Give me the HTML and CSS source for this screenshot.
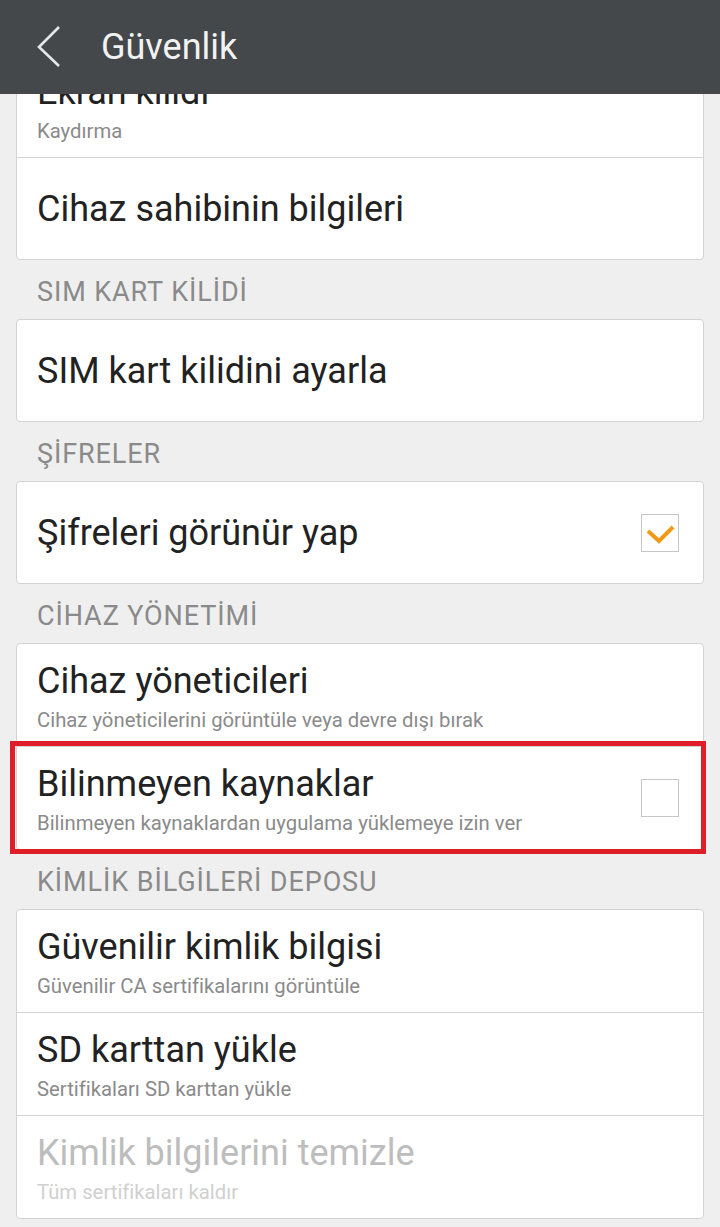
FILE: index.html
```html
<!DOCTYPE html>
<html lang="tr">
<head>
  <meta charset="UTF-8" />
  <meta name="viewport" content="width=device-width, initial-scale=1.0"/>
  <title>Güvenlik</title>
  <link rel="stylesheet" href="styles.css">
</head>
<body>
  <header class="appbar">
    <svg class="back" width="30" height="44" viewBox="0 0 30 44">
      <polyline points="24,2 4,22 24,41" fill="none" stroke="#e6e7e8" stroke-width="2.6"/>
    </svg>
    <h1>Güvenlik</h1>
  </header>

  <main class="list">
    <div class="scroll">
      <div class="card">
        <div class="row two">
          <div class="text">
            <div class="title">Ekran kilidi</div>
            <div class="summary">Kaydırma</div>
          </div>
        </div>
        <div class="row">
          <div class="text">
            <div class="title">Cihaz sahibinin bilgileri</div>
          </div>
        </div>
      </div>

      <div class="section">SIM KART KİLİDİ</div>
      <div class="card">
        <div class="row">
          <div class="text">
            <div class="title">SIM kart kilidini ayarla</div>
          </div>
        </div>
      </div>

      <div class="section">ŞİFRELER</div>
      <div class="card">
        <div class="row">
          <div class="text">
            <div class="title">Şifreleri görünür yap</div>
          </div>
          <span class="checkbox">
            <svg width="36" height="36" viewBox="0 0 36 36">
              <polyline points="6,16 17,26 31,12" fill="none" stroke="#f29a17" stroke-width="4"/>
            </svg>
          </span>
        </div>
      </div>

      <div class="section">CİHAZ YÖNETİMİ</div>
      <div class="card">
        <div class="row two">
          <div class="text">
            <div class="title">Cihaz yöneticileri</div>
            <div class="summary">Cihaz yöneticilerini görüntüle veya devre dışı bırak</div>
          </div>
        </div>
        <div class="row two highlight">
          <div class="text">
            <div class="title">Bilinmeyen kaynaklar</div>
            <div class="summary">Bilinmeyen kaynaklardan uygulama yüklemeye izin ver</div>
          </div>
          <span class="checkbox"></span>
        </div>
      </div>

      <div class="section">KİMLİK BİLGİLERİ DEPOSU</div>
      <div class="card">
        <div class="row two">
          <div class="text">
            <div class="title">Güvenilir kimlik bilgisi</div>
            <div class="summary">Güvenilir CA sertifikalarını görüntüle</div>
          </div>
        </div>
        <div class="row two">
          <div class="text">
            <div class="title">SD karttan yükle</div>
            <div class="summary">Sertifikaları SD karttan yükle</div>
          </div>
        </div>
        <div class="row two disabled">
          <div class="text">
            <div class="title">Kimlik bilgilerini temizle</div>
            <div class="summary">Tüm sertifikaları kaldır</div>
          </div>
        </div>
      </div>
    </div>
  </main>
</body>
</html>
```

FILE: styles.css
```css
body {
  margin: 0;
  font-family: Roboto, "Noto Sans", sans-serif;
  background-color: #efefef;
  color: #222;
  height: 100vh;
  overflow: hidden;
  display: flex;
  flex-direction: column;
}

.appbar {
  height: 94px;
  flex: none;
  background-color: #44484b;
  display: flex;
  align-items: center;
  padding-left: 35px;
}

.back {
  display: block;
}

.appbar h1 {
  margin: 0 0 0 36px;
  font-size: 36px;
  font-weight: 400;
  color: #f2f2f2;
}

.list {
  flex: 1;
  overflow: hidden;
}

.scroll {
  margin-top: -40px;
  padding: 0 16px;
}

.card {
  background: #fff;
  border: 1px solid #d3d3d3;
  border-radius: 4px;
}

.section {
  height: 54px;
  line-height: 54px;
  padding: 5px 0 0 21px;
  font-size: 27px;
  letter-spacing: 0.9px;
  color: #8a8a8a;
}

.row {
  height: 101px;
  display: flex;
  align-items: center;
  padding: 0 24px 0 20px;
}

.row + .row {
  border-top: 1px solid #d3d3d3;
}

.row.two {
  height: 102px;
  align-items: flex-start;
}

.row.two .text {
  padding-top: 14px;
}

.text {
  flex: 1;
}

.title {
  font-size: 36px;
  line-height: 46px;
  color: #222;
}

.summary {
  font-size: 20.3px;
  line-height: 32px;
  color: #8a8a8a;
}

.disabled .title {
  color: #bdbdbd;
}

.disabled .summary {
  color: #d0d0d0;
}

.checkbox {
  width: 36px;
  height: 36px;
  border: 1px solid #c6c6c6;
  display: flex;
  align-items: center;
  justify-content: center;
}

.row.two .checkbox {
  align-self: center;
}

.highlight {
  position: relative;
}

.highlight::after {
  content: "";
  position: absolute;
  top: -6px;
  bottom: -5px;
  left: -7px;
  right: -3px;
  border: 5px solid #de1f2a;
}
```
